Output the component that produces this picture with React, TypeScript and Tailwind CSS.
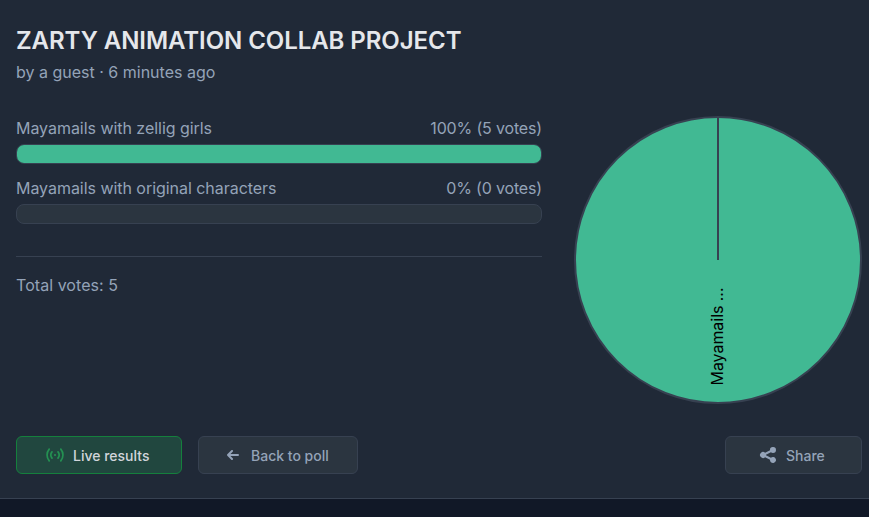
import React from 'react';
import { HiShare } from 'react-icons/hi';

interface PollOption {
    label: string;
    votes: number;
}

const options: PollOption[] = [
    { label: 'Mayamails with zellig girls', votes: 5 },
    { label: 'Mayamails with original characters', votes: 0 },
];

const totalVotes = options.reduce((sum, option) => sum + option.votes, 0);

const LiveIcon: React.FC = () => (
    <svg viewBox="0 0 18 14" className="w-[18px] h-3.5 text-[#249152]" fill="none" stroke="currentColor" strokeWidth="1.7" strokeLinecap="round">
        <path d="M3.2 1.1a9.2 9.2 0 0 0 0 11.8M6 3.9a5 5 0 0 0 0 6.2M12 3.9a5 5 0 0 1 0 6.2M14.8 1.1a9.2 9.2 0 0 1 0 11.8" />
        <circle cx="9" cy="7" r="1.1" fill="currentColor" stroke="none" />
    </svg>
);

const BackIcon: React.FC = () => (
    <svg viewBox="0 0 12 10" className="w-3 h-2.5" fill="none" stroke="currentColor" strokeWidth="2" strokeLinecap="round" strokeLinejoin="round">
        <path d="M5 1 1 5l4 4M1 5h10" />
    </svg>
);

const ResultRow: React.FC<{ option: PollOption }> = ({ option }) => {
    const percent = Math.round((option.votes / totalVotes) * 100);
    return (
        <div>
            <div className="flex justify-between leading-6">
                <span className="tracking-[-0.04px]">{option.label}</span>
                <span className="tracking-[-0.16px]">{percent}% ({option.votes} votes)</span>
            </div>
            <div className="mt-1 h-5 rounded-lg border border-[#374151] bg-[#2b3540] overflow-hidden">
                <div className="h-full bg-[#41b993]" style={{ width: `${percent}%` }}></div>
            </div>
        </div>
    );
};

const PieChart: React.FC = () => (
    <svg viewBox="0 0 288 288" className="w-72 h-72 shrink-0">
        <circle cx="144" cy="144" r="143" fill="#41b993" stroke="#374151" strokeWidth="2" />
        <path d="M144 144V1" stroke="#374151" strokeWidth="2" />
        <text transform="translate(149 269.5) rotate(-90)" fontSize="16" letterSpacing="-0.05" fill="#000">Mayamails ...</text>
    </svg>
);

const App: React.FC = () => {
    return (
        <div className="h-[517px] overflow-hidden bg-[#111827] font-['Inter',sans-serif] text-base text-[#94a3b8]">
            <div className="h-[499px] border-b border-[#374151] bg-[#202937] pl-4 pr-[7px] pt-[25px]">
                <h1 className="text-2xl leading-8 font-semibold tracking-[-0.06px] text-[#e5e7eb]">ZARTY ANIMATION COLLAB PROJECT</h1>
                <p className="mt-[3px] leading-6">by a guest · 6 minutes ago</p>

                <div className="mt-8 flex gap-8">
                    <div className="flex-1">
                        <div className="flex flex-col gap-3">
                            {options.map((option) => (
                                <ResultRow key={option.label} option={option} />
                            ))}
                        </div>
                        <div className="mt-8 border-t border-[#374151] pt-4 leading-6 tracking-[0.05px]">Total votes: {totalVotes}</div>
                    </div>
                    <PieChart />
                </div>

                <div className="mt-8 flex gap-4 text-sm font-medium">
                    <button className="flex h-[38px] w-[166px] items-center rounded-md border border-[#15803d] bg-[#21473f] pl-[29px] text-[#d1d5db]">
                        <LiveIcon />
                        <span className="ml-[9px] pt-0.5">Live results</span>
                    </button>
                    <button className="flex h-[38px] w-40 items-center rounded-md border border-[#374151] bg-[#2b3540] pl-7">
                        <BackIcon />
                        <span className="ml-3 pt-0.5">Back to poll</span>
                    </button>
                    <button className="ml-auto flex h-[38px] w-[137px] items-center rounded-md border border-[#374151] bg-[#2b3540] pl-8">
                        <HiShare className="w-5 h-5" />
                        <span className="ml-2 pt-0.5">Share</span>
                    </button>
                </div>
            </div>
        </div>
    );
};

export default App;
